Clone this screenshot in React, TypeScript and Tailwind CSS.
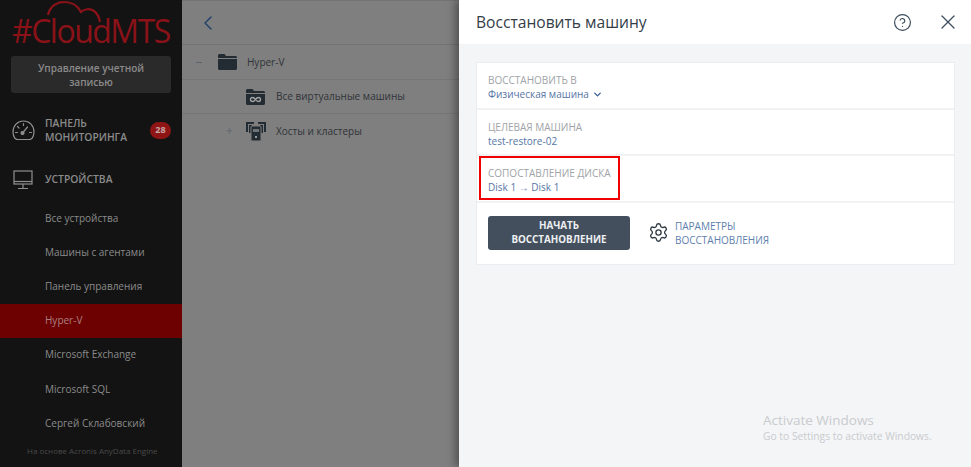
import { ChevronDown, ChevronLeft, CircleHelp, Settings, X } from "lucide-react";

const subItems = ["Все устройства", "Машины с агентами", "Панель управления", "Hyper-V", "Microsoft Exchange", "Microsoft SQL", "Сергей Склабовский"];

function GaugeIcon() {
  return (
    <svg className="shrink-0" width="23" height="22" viewBox="0 0 23 22" fill="none" stroke="#8f8f8f" strokeWidth="1.200" strokeLinecap="round">
      <path d="M4 19.500H3C1.700 17.500 1 15.500 1 13C1 6.500 5.500 2 11.500 2S22 6.500 22 13C22 15.500 21.300 17.500 20 19.500H19" />
      <path d="M4 20.500H19" strokeWidth="1" />
      <path d="M11.500 4.500V6.500M5.500 7.500L7 9M3.500 13.500H5.500M17.500 13.500H19.500" />
      <circle cx="10.500" cy="14" r="1.500" fill="#8f8f8f" />
      <path d="M11 13.500L15.500 8" />
    </svg>
  );
}

function MonitorIcon() {
  return (
    <svg className="shrink-0" width="20" height="20" viewBox="0 0 20 20" fill="none" stroke="#8f8f8f" strokeWidth="1.200">
      <rect x="1" y="1" width="18" height="13" />
      <path d="M1 11.500H19" />
      <path d="M10 14V18M5 18.500H15" />
    </svg>
  );
}

function Sidebar() {
  return (
    <aside className="flex h-full w-[182px] shrink-0 flex-col bg-[#131313] text-[#8b8b8b]">
      <div className="relative h-[56px] shrink-0 overflow-hidden">
        <svg className="absolute left-[46px] top-0" width="60" height="24" viewBox="0 0 60 24" fill="none" stroke="#8a1218" strokeWidth="2.200">
          <path d="M2 15C4 6 11 2 18 2C26 2 32 6 35 12C38 9 44 8 48 11C51 13 53 17 54 22" />
        </svg>
        <div className="absolute left-[12px] top-[14px] whitespace-nowrap text-[32px] font-medium leading-[34px] tracking-[-1.500px] text-[#8a1218]">#CloudMTS</div>
      </div>
      <button className="mx-[11px] flex h-[37px] shrink-0 items-center justify-center rounded-[3px] bg-[#2a2a2a] px-4 text-center text-[10px] font-semibold leading-[14px] text-[#8b8b8b]">
        Управление учетной записью
      </button>
      <div className="mt-[14px] flex h-[46px] shrink-0 items-center pl-[12px] pr-[11px]">
        <GaugeIcon />
        <span className="ml-[10px] flex-1 text-[10.300px] font-semibold uppercase leading-[14px]">Панель мониторинга</span>
        <span className="flex h-[17px] w-[21px] items-center justify-center rounded-full bg-[#8f1515] text-[9px] font-bold text-[#c9a5a5]">28</span>
      </div>
      <div className="mt-[10px] flex h-[34px] shrink-0 items-center pl-[13px]">
        <MonitorIcon />
        <span className="ml-[12px] text-[10.300px] font-semibold uppercase">Устройства</span>
      </div>
      <nav className="mt-[4px] flex flex-col">
        {subItems.map((item) => (
          <div key={item} className={`flex h-[34.2px] items-center pl-[45px] text-[10px] font-normal ${item === "Hyper-V" ? "bg-[#6d0000] text-[#a98080]" : ""}`}>
            {item}
          </div>
        ))}
      </nav>
      <div className="mt-[5px] pl-[27px] text-[8px] text-[#4a4a4a]">На основе Acronis AnyData Engine</div>
    </aside>
  );
}

function HostsIcon() {
  return (
    <svg width="20" height="20" viewBox="0 0 20 20" fill="#232b33">
      <path d="M0 1h8v2H2v8H0zM12 1h8v10h-2V3h-6z" />
      <path d="M3 4h3v8H3zM14 4h3v8h-3z" />
      <rect x="5" y="5" width="10" height="15" rx="1" fill="#232b33" stroke="#7f7f7f" strokeWidth="1" />
      <rect x="7" y="8" width="6" height="3" fill="#6f7378" />
      <rect x="9" y="15" width="2" height="2" fill="#9a9a9a" />
    </svg>
  );
}

function TreeArea() {
  return (
    <main className="flex h-full flex-1 flex-col border-t border-[#737373] bg-[#7f7f7f] text-[10px] text-[#2f3338]">
      <div className="flex h-[44px] shrink-0 items-center border-b border-[#737373] pl-[14px]">
        <ChevronLeft size={24} strokeWidth={1.5} className="text-[#26426b]" />
      </div>
      <div className="flex h-[35px] shrink-0 items-center border-b border-[#767676]">
        <span className="ml-[14px] h-[1px] w-[6px] bg-[#5b636c]" />
        <svg className="ml-[16px]" width="19" height="16" viewBox="0 0 19 16" fill="#232b33">
          <path d="M0 1.500C0 .7.7 0 1.500 0h5L8 2h9.500c.8 0 1.500.7 1.500 1.500V4H0z" />
          <path d="M0 5h19v9.500c0 .8-.7 1.500-1.500 1.500h-16C.7 16 0 15.300 0 14.500z" />
        </svg>
        <span className="ml-[10px]">Hyper-V</span>
      </div>
      <div className="flex h-[34px] shrink-0 items-center border-b border-[#767676] pl-[64px]">
        <svg width="19" height="16" viewBox="0 0 19 16">
          <path fill="#232b33" d="M0 1.500C0 .7.7 0 1.500 0h5L8 2h9.500c.8 0 1.500.7 1.500 1.500V4H0zM0 5h19v9.500c0 .8-.7 1.500-1.500 1.500h-16C.7 16 0 15.300 0 14.500z" />
          <path fill="none" stroke="#a5a5a5" strokeWidth="1.300" d="M9.500 10.500c-1-1.500-2-2-3-2a2 2 0 0 0 0 4c1 0 2-.5 3-2c1-1.500 2-2 3-2a2 2 0 0 1 0 4c-1 0-2-.5-3-2z" />
        </svg>
        <span className="ml-[11px]">Все виртуальные машины</span>
      </div>
      <div className="flex h-[34px] shrink-0 items-center pl-[44px]">
        <span className="w-[20px] text-[12px] font-semibold leading-none text-[#666c73]">+</span>
        <HostsIcon />
        <span className="ml-[10px]">Хосты и кластеры</span>
      </div>
    </main>
  );
}

function Field({ label, children }: { label: string; children: React.ReactNode }) {
  return (
    <div className="h-[46.5px] border-b-2 border-[#f1f2f4] px-[11px] pt-[10px]">
      <div className="text-[10px] uppercase leading-[14px] text-[#a0a3a8]">{label}</div>
      <div className="flex items-center text-[10px] leading-[15px] text-[#5674a6]">{children}</div>
    </div>
  );
}

function RestorePanel() {
  return (
    <section className="relative z-10 flex h-full w-[512px] shrink-0 flex-col bg-[#f4f5f7] shadow-[-4px_0_8px_rgba(0,0,0,0.35)]">
      <header className="flex h-[44px] shrink-0 items-center bg-white pl-[17px] pr-[11px]">
        <h1 className="flex-1 pt-[2px] text-[15.600px] font-normal text-[#333e48]">Восстановить машину</h1>
        <CircleHelp size={19} strokeWidth={1.500} className="text-[#3e4d5c]" />
        <X size={24} strokeWidth={1.300} className="ml-[24px] text-[#3e4d5c]" />
      </header>
      <div className="relative ml-[17px] mr-[16px] mt-[18px] h-[203px] border border-[#ebedf0] bg-white">
        <Field label="Восстановить в">
          Физическая машина
          <ChevronDown size={11} strokeWidth={3} className="ml-[3px] text-[#3a5f96]" />
        </Field>
        <Field label="Целевая машина">test-restore-02</Field>
        <Field label="Сопоставление диска">Disk 1 → Disk 1</Field>
        <div className="flex items-center px-[11px] pt-[13px]">
          <button className="h-[34px] w-[142px] rounded-[3px] bg-[#434f5d] text-[9.800px] font-bold uppercase leading-[14px] text-[#eef0f2]">
            Начать<br />восстановление
          </button>
          <Settings size={21} strokeWidth={1.500} className="ml-[18px] text-[#2f3a44]" />
          <span className="ml-[6px] text-[10px] uppercase leading-[14px] text-[#5e80ad]">
            Параметры<br />восстановления
          </span>
        </div>
        <div className="absolute left-[2px] top-[93px] h-[44px] w-[141px] border-2 border-[#f00000]" />
      </div>
      <div className="absolute left-[304px] top-[411px] text-[#c9cbce]">
        <div className="text-[13.500px] leading-[18px]">Activate Windows</div>
        <div className="text-[10.300px] leading-[15px]">Go to Settings to activate Windows.</div>
      </div>
    </section>
  );
}

export default function App() {
  return (
    <div className="flex h-[467px] w-[971px] overflow-hidden font-['Open_Sans',sans-serif]">
      <Sidebar />
      <TreeArea />
      <RestorePanel />
    </div>
  );
}
